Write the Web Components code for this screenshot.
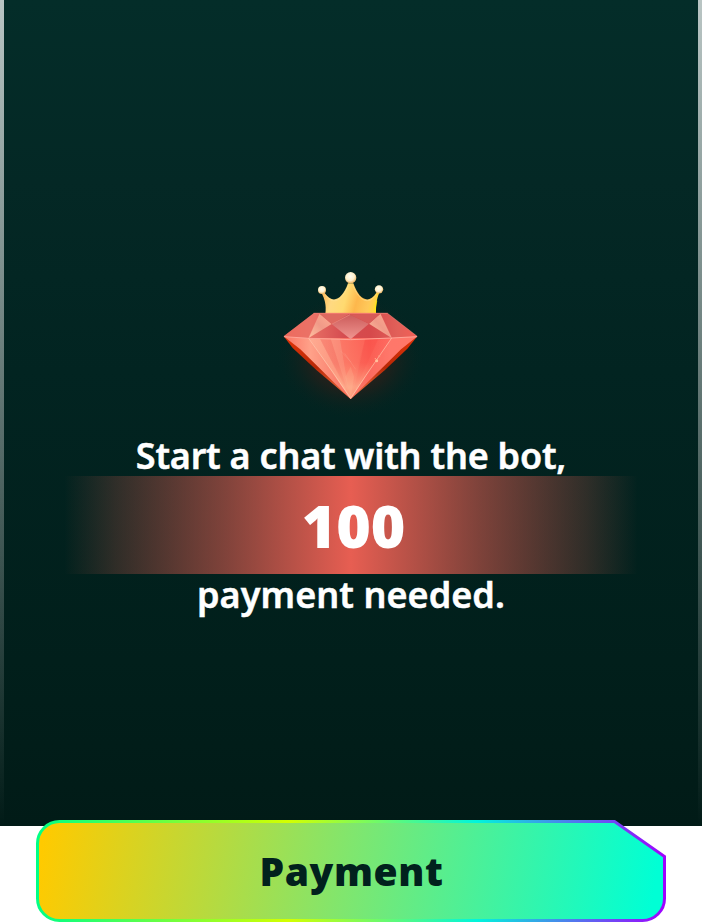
<!DOCTYPE html>
<html lang="en">
<head>
<meta charset="utf-8">
<title>Payment</title>
<style>
html,body{margin:0;width:702px;height:922px;overflow:hidden;background:#fff}
body{font-family:"Noto Sans","Open Sans",sans-serif}
</style>
</head>
<body>
<payment-screen>
  <payment-card>
    <gem-icon></gem-icon>
    <prompt-line style="--ls:-.22px">Start a chat with the bot,</prompt-line>
    <price-band>100</price-band>
    <prompt-line style="--ls:.06px">payment needed.</prompt-line>
  </payment-card>
  <pay-button>Payment</pay-button>
</payment-screen>
<script>
function define(name, html) {
  const template = document.createElement('template');
  template.innerHTML = html;
  customElements.define(name, class extends HTMLElement {
    constructor() {
      super();
      this.attachShadow({ mode: 'open' }).append(template.content.cloneNode(true));
    }
  });
}

define('payment-screen', `
<style>:host{display:flex;flex-direction:column;align-items:center;width:702px;height:922px}</style>
<slot></slot>`);

define('payment-card', `
<style>
:host{display:block;box-sizing:border-box;width:702px;height:826px;flex:none;padding:0 4px;
 background:linear-gradient(rgba(255,255,255,.72),rgba(255,255,255,.36) 50%,rgba(255,255,255,0)),linear-gradient(#052f2b,#02231f 45%,#011b17)}
.inner{box-sizing:border-box;height:826px;padding-top:260px;display:flex;flex-direction:column;align-items:center;
 background:linear-gradient(#042d29 0,#042825 22%,#022421 45%,#011f1b 80%,#011b17 100%)}
</style>
<div class="inner"><slot></slot></div>`);

define('gem-icon', `
<style>:host{display:block;width:160px;height:160px;margin-left:-2px}svg{display:block;overflow:visible}</style>
<svg width="160" height="160" viewBox="0 0 480 480" aria-hidden="true">
<defs>
<radialGradient id="halo"><stop offset="0" stop-color="#7b2114" stop-opacity=".6"/><stop offset=".55" stop-color="#431c15" stop-opacity=".4"/><stop offset="1" stop-color="#022421" stop-opacity="0"/></radialGradient>
<linearGradient id="crown" x1="0" x2="1" y1="0" y2=".15"><stop offset="0" stop-color="#ffb04e"/><stop offset=".25" stop-color="#ffd981"/><stop offset=".48" stop-color="#ffda70"/><stop offset=".68" stop-color="#fdb74c"/><stop offset=".9" stop-color="#ffc95a"/><stop offset="1" stop-color="#ffd540"/></linearGradient>
<radialGradient id="pearl" cx=".45" cy=".38" r=".58"><stop offset="0" stop-color="#fffef3"/><stop offset=".65" stop-color="#fff0cc"/><stop offset="1" stop-color="#f0bc70"/></radialGradient>
<linearGradient id="body" x1="0" x2="1" y1="0" y2="0"><stop offset="0" stop-color="#fa7464"/><stop offset=".2" stop-color="#ffa189"/><stop offset=".4" stop-color="#fa806e"/><stop offset=".64" stop-color="#fb5950"/><stop offset=".8" stop-color="#ff6b61"/><stop offset="1" stop-color="#ff6c5f"/></linearGradient>
<linearGradient id="tip" x1="0" y1="0" x2="0" y2="1"><stop offset="0" stop-color="#ff8c78" stop-opacity="0"/><stop offset=".4" stop-color="#ff9a78" stop-opacity=".12"/><stop offset=".8" stop-color="#ffb491" stop-opacity=".75"/><stop offset="1" stop-color="#ff9877"/></linearGradient>
<linearGradient id="top" x1="0" x2="1"><stop offset="0" stop-color="#ed6255"/><stop offset=".2" stop-color="#e87065"/><stop offset=".45" stop-color="#d54c50"/><stop offset=".65" stop-color="#d6494b"/><stop offset=".85" stop-color="#e16059"/><stop offset="1" stop-color="#f46056"/></linearGradient>
<linearGradient id="mid" x1="0" x2="0" y1="0" y2="1"><stop offset="0" stop-color="#cc5b5a"/><stop offset="1" stop-color="#f09691"/></linearGradient>
<linearGradient id="facet" x1="0" x2="1" y1="1" y2="0"><stop offset="0" stop-color="#ffc0a0"/><stop offset=".5" stop-color="#f09a88"/><stop offset="1" stop-color="#ffac91"/></linearGradient>
<linearGradient id="rim" x1="0" y1="0" x2="0" y2="1"><stop offset="0" stop-color="#e23409"/><stop offset=".5" stop-color="#b92806"/><stop offset="1" stop-color="#f47a4a"/></linearGradient>
</defs>
<ellipse cx="242" cy="290" rx="225" ry="190" fill="url(#halo)"/>
<path d="M166 162C170 134 163 116 155 99L164 99C188 134 217 119 234 70H250C267 119 296 135 319 98L328 99C319 116 318 141 318 162Z" fill="url(#crown)"/>
<path d="M166 104C187 137 216 124 235 77M249 77C268 124 297 137 319 103" fill="none" stroke="#ffe7a0" stroke-width="2" opacity=".7"/>
<path d="M320 122Q315 140 315 160" fill="none" stroke="#fff000" stroke-width="4" opacity=".7"/>
<circle cx="242" cy="53" r="17" fill="url(#pearl)"/><circle cx="156" cy="90" r="12" fill="url(#pearl)"/><circle cx="327" cy="88" r="12.5" fill="url(#pearl)"/>
<path d="M41 229L68 264L140 331L242 417L344 331L412 266L442 229Z" fill="url(#rim)"/>
<path d="M41 229H442L393 268L242 417L91 268Z" fill="url(#body)"/>
<path d="M118 235L150 236L218 365L242 417Z" fill="#ffc1a2" opacity=".35"/>
<path d="M150 236H182L230 382L242 417Z" fill="#ee6860" opacity=".25"/>
<path d="M182 236L210 236L240 417Z" fill="#ffb29a" opacity=".25"/>
<path d="M210 236H286L254 350L242 417Z" fill="#ff705e" opacity=".35"/>
<path d="M286 236H325L248 405Z" fill="#f84a45" opacity=".35"/>
<path d="M364 235L242 417L393 268L442 229Z" fill="#ff9682" opacity=".3"/>
<path d="M114 235H364L242 417Z" fill="url(#tip)"/>
<path d="M242 320L226 350L242 417L252 350Z" fill="#ffc9a0" opacity=".2"/>
<path d="M131 160H353L442 229L364 234H114L41 229Z" fill="url(#top)"/>
<path d="M131 160H149L116 234L41 229Z" fill="#ed7467" opacity=".5"/>
<path d="M149 161L185 192L116 234Z" fill="url(#facet)"/>
<path d="M331 161L297 191L365 234Z" fill="url(#facet)"/>
<path d="M185 192L238 163L297 191L242 238Z" fill="url(#mid)"/>
<path d="M149 161H238L185 192Z" fill="#de6960"/><path d="M238 163L331 161L297 191Z" fill="#d85b58"/>
<path d="M186 192L240 164" fill="none" stroke="#ed8b7d" stroke-width="2"/>
<path d="M131 160H353" stroke="#f47b72" stroke-width="3"/>
<path d="M353 160L442 229M331 162L365 234M149 162L116 234" fill="none" stroke="#ffb09a" stroke-width="1.5" opacity=".5"/>
<path d="M42 230L116 235L242 239L365 234L441 230" fill="none" stroke="#ffa497" stroke-width="3"/>
<path d="M116 235L188 336L242 415M365 234L288 346L242 415" fill="none" stroke="#ffd3b8" stroke-width="2.5" opacity=".7"/>
<path d="M213 274L244 307M224 280L257 328" stroke="#ffb4a0" stroke-width="1.5" opacity=".45"/>
<circle cx="320" cy="302" r="4.5" fill="#ffc19c"/><circle cx="328" cy="288" r="3" fill="#ff987f"/><circle cx="316" cy="296" r="2" fill="#ffab90"/>
</svg>`);

define('prompt-line', `
<style>:host{display:flex;align-items:center;justify-content:center;box-sizing:border-box;height:56px;padding-top:16px;font-size:36px;line-height:40px;font-weight:600;color:#fff;white-space:nowrap;letter-spacing:var(--ls);-webkit-text-stroke:.5px #fff}
:host(:last-child){height:42px;padding-top:0;line-height:42px}</style>
<slot></slot>`);

define('price-band', `
<style>:host{display:flex;align-items:center;justify-content:center;box-sizing:border-box;width:574px;height:98px;padding-left:5px;font-size:59px;font-weight:900;line-height:98px;color:#fff;
background:linear-gradient(90deg,rgba(231,94,82,0),rgba(231,94,82,.2) 9%,rgba(231,94,82,.55) 28%,#e75e52 50%,rgba(231,94,82,.55) 72%,rgba(231,94,82,.2) 91%,rgba(231,94,82,0))}</style>
<slot></slot>`);

define('pay-button', `
<style>
:host{display:grid;width:630px;height:102px;margin-top:-6px;flex:none;z-index:1}
svg,.label{grid-area:1/1}
.label{display:flex;align-items:center;justify-content:center;z-index:1;padding-left:1px;font-size:39px;font-weight:900;line-height:102px;letter-spacing:.6px;color:#01211d}
</style>
<svg width="630" height="102" viewBox="0 0 630 102" aria-hidden="true">
<defs>
<linearGradient id="fill" gradientUnits="userSpaceOnUse" x1="8" y1="10" x2="612" y2="110"><stop offset="0" stop-color="#ffca00"/><stop offset=".5" stop-color="#80e66e"/><stop offset="1" stop-color="#00ffd5"/></linearGradient>
<linearGradient id="edge" gradientUnits="userSpaceOnUse" x1="0" y1="0" x2="630" y2="0"><stop offset="0" stop-color="#00ff86"/><stop offset=".4" stop-color="#d4ff00"/><stop offset=".7" stop-color="#00f5dc"/><stop offset="1" stop-color="#a000ff"/></linearGradient>
</defs>
<path d="M23.5 1.5H578.5L628.5 36.5V78.5A22 22 0 0 1 606.5 100.5H23.5A22 22 0 0 1 1.5 78.5V23.5A22 22 0 0 1 23.5 1.5Z" fill="url(#fill)" stroke="url(#edge)" stroke-width="3"/>
</svg>
<div class="label"><slot></slot></div>`);
</script>
</body>
</html>
